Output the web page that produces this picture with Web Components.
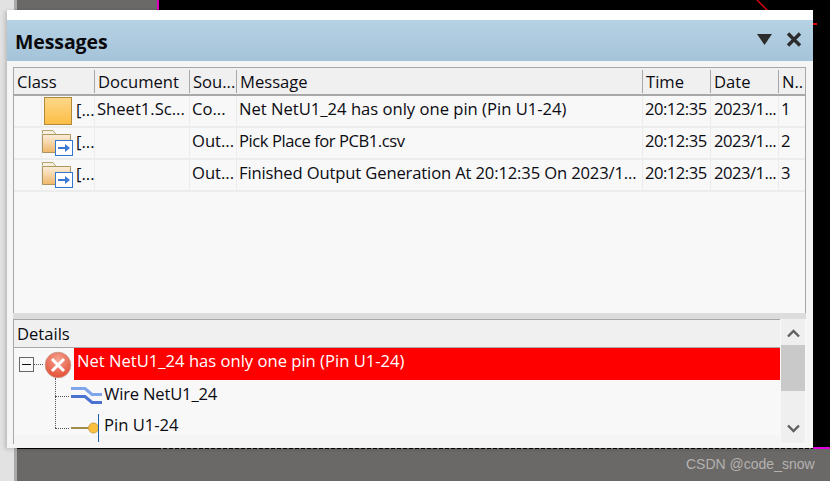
<!DOCTYPE html>
<html>
<head>
<meta charset="utf-8">
<title>Messages</title>
<style>
  html, body { margin: 0; padding: 0; width: 830px; height: 481px; overflow: hidden; background: #000; }
  body { font-family: "Open Sans", "Noto Sans", sans-serif; color: #0b0b12; }
</style>
</head>
<body>
<pcb-desktop>
  <msg-panel title="Messages">
    <msg-table></msg-table>
    <msg-details></msg-details>
  </msg-panel>
</pcb-desktop>

<script>
const COLS = [81, 95, 47, 406, 68, 68, 27]
const FONT_SIZE = "16.6px"

const ICONS = {
  marker: `<svg width="30" height="28" viewBox="0 0 30 28"><defs><linearGradient id="m" x1="0" y1="0" x2="0" y2="1"><stop offset="0" stop-color="#fcd88a"/><stop offset="1" stop-color="#fdbd45"/></linearGradient></defs><rect x="1.5" y="0.5" width="27" height="27" fill="url(#m)" stroke="#b08a38"/></svg>`,
  folder: `<svg width="32" height="28" viewBox="0 0 32 28"><defs><linearGradient id="f" x1="0" y1="0" x2="0" y2="1"><stop offset="0" stop-color="#fbeedd"/><stop offset="1" stop-color="#efb768"/></linearGradient></defs><path d="M0.5 4.5V1.5H11L14 5.5" fill="#f8efdc" stroke="#b5a473"/><path d="M0.5 5.5H28.5V23.5H0.5Z" fill="url(#f)" stroke="#ad9560"/><rect x="13.5" y="11.5" width="17" height="15" fill="#fff" stroke="#2f78d0"/><path d="M16 18H23V15L28 19L23 23V20H16Z" fill="#3a7ad0"/></svg>`,
  error: `<svg width="28" height="28" viewBox="0 0 28 28"><defs><radialGradient id="e" cx="0.5" cy="0.3" r="0.75"><stop offset="0" stop-color="#f5a593"/><stop offset="1" stop-color="#e2472c"/></radialGradient></defs><circle cx="14" cy="14" r="12.8" fill="url(#e)" stroke="#cf9a8e"/><path d="M8 8L20 20M20 8L8 20" stroke="#fff" stroke-width="3"/></svg>`,
  wire: `<svg width="32" height="20" viewBox="0 0 32 20"><path d="M0 2.5H14L21 8.5H31" fill="none" stroke="#7fa6ea" stroke-width="3"/><path d="M0 10.5H14L21 16.5H31" fill="none" stroke="#4a72d0" stroke-width="3"/></svg>`,
  pin: `<svg width="28" height="12" viewBox="0 0 28 12"><path d="M0 6H19" stroke="#a08c48" stroke-width="2"/><circle cx="22.5" cy="6" r="5" fill="#fcc040" stroke="#d0a040"/></svg>`,
}

class PcbDesktop extends HTMLElement {
  constructor() {
    super()
    this.attachShadow({ mode: "open" })
    this.shadowRoot.innerHTML = `
      <style>
        :host { display: block; position: relative; width: 830px; height: 481px; background: #000; overflow: hidden; }
        .sheet { position: absolute; left: 17px; top: 449px; right: 0; bottom: 0; background: #6b6967; }
        .sheet-top { position: absolute; left: 17px; top: 0; width: 140px; height: 10px; background: #6b6967; }
        .edge { position: absolute; left: 0; top: 0; width: 14px; height: 481px; background: #e2e2e2; }
        .edge2 { position: absolute; left: 14px; top: 0; width: 3px; height: 481px; background: #a9a9a9; }
        .pink { position: absolute; left: 157px; top: 0; width: 2px; height: 10px; background: #e000c0; }
        .pink2 { position: absolute; left: 813px; top: 447px; width: 17px; height: 2px; background: #e000e0; }
        .dash { position: absolute; left: 157px; top: 448px; width: 656px; height: 1px;
                background: repeating-linear-gradient(90deg, #000 0 4px, #777 4px 6px); }
        .red { position: absolute; left: 813px; top: 23px; width: 4px; height: 2px; background: #e00000; }
        svg { position: absolute; left: 750px; top: 0; }
        .mark { position: absolute; left: 686px; bottom: 9px; font: 14px "Liberation Sans", Arial, sans-serif; color: #b4b2b0; }
        .win { position: absolute; left: 7px; top: 10px; box-shadow: -2px 1px 4px rgba(0,0,0,.18); }
      </style>
      <div class="edge"></div>
      <div class="edge2"></div>
      <div class="sheet-top"></div>
      <div class="sheet"></div>
      <div class="pink"></div>
      <div class="pink2"></div>
      <div class="dash"></div>
      <div class="red"></div>
      <svg width="20" height="11" viewBox="0 0 20 11"><path d="M7 0L18 11" stroke="#e00010" stroke-width="1.4"/></svg>
      <div class="win"><slot></slot></div>
      <div class="mark">CSDN @code_snow</div>
    `
  }
}

class MsgPanel extends HTMLElement {
  constructor() {
    super()
    this.attachShadow({ mode: "open" })
    const title = this.getAttribute("title")
    this.shadowRoot.innerHTML = `
      <style>
        :host { display: block; width: 806px; height: 438px; background: #f5f5f5; box-sizing: border-box; }
        .strip { height: 10px; background: #fff; }
        header {
          height: 41px; display: flex; align-items: center; justify-content: space-between;
          background: linear-gradient(#b6d1e4, #a5c4d9); padding: 0 11px 0 8px;
        }
        h1 { margin: 0; font: 700 19.5px "Open Sans", sans-serif; color: #0a0a0e; letter-spacing: -0.1px; position: relative; top: 1px; }
        .btns { display: flex; align-items: center; gap: 14px; margin-top: -3px; }
        svg { display: block; }
        .body { padding: 6px 7px 0 6px; }
      </style>
      <div class="strip"></div>
      <header>
        <h1>${title}</h1>
        <div class="btns">
          <svg width="15" height="11" viewBox="0 0 15 11"><path d="M0 0H15L7.5 11Z" fill="#2c2c2c"/></svg>
          <svg width="16" height="15" viewBox="0 0 16 15"><path d="M2 1.5L14 13.5M14 1.5L2 13.5" stroke="#2c2c2c" stroke-width="3.4"/></svg>
        </div>
      </header>
      <div class="body"><slot></slot></div>
    `
  }
}

class MsgRow extends HTMLElement {
  constructor() {
    super()
    this.attachShadow({ mode: "open" })
    const kind = this.getAttribute("icon")
    const inset = kind == "marker" ? 29 : 28
    const gap = kind == "marker" ? 3 : 2
    const tight = this.getAttribute("tight") || "0"
    const cells = JSON.parse(this.getAttribute("cells"))
    this.shadowRoot.innerHTML = `
      <style>
        :host { display: grid; grid-template-columns: ${COLS.map(c => c + "px").join(" ")}; height: 32px; box-sizing: border-box;
                border-bottom: 2px solid #ececec; background: #f8f8f8; }
        div { border-right: 1px solid #ececec; padding-left: 2px; line-height: 26px; white-space: nowrap; overflow: hidden; font-size: ${FONT_SIZE}; box-sizing: border-box; }
        div:last-child { border-right: none; }
        .cls { display: flex; align-items: center; padding-left: ${inset}px; height: 30px; background: linear-gradient(90deg, #f8f8f8 27px, #ececec 27px, #ececec 28px, #f8f8f8 28px); }
        .cls svg { display: block; flex: none; margin-right: ${gap}px; }
        .cls span { line-height: 26px; margin-bottom: 2px; }
        .msg { letter-spacing: ${tight}; }
        .num { letter-spacing: -0.5px; }
        .date { padding-left: 3px; }
      </style>
      <div class="cls">${ICONS[kind]}<span>[...</span></div>
      <div>${cells[0]}</div>
      <div>${cells[1]}</div>
      <div class="msg">${cells[2]}</div>
      <div class="num">${cells[3]}</div>
      <div class="num date">${cells[4]}</div>
      <div>${cells[5]}</div>
    `
  }
}

class MsgTable extends HTMLElement {
  constructor() {
    super()
    this.attachShadow({ mode: "open" })
    const heads = ["Class", "Document", "Sou...", "Message", "Time", "Date", "N.."]
    const rows = [
      ["marker", "0", ["Sheet1.Sc...", "Co...", "Net NetU1_24 has only one pin (Pin U1-24)", "20:12:35", "2023/1...", "1"]],
      ["folder", "-0.45px", ["", "Out...", "Pick Place for PCB1.csv", "20:12:35", "2023/1...", "2"]],
      ["folder", "-0.14px", ["", "Out...", "Finished Output Generation At 20:12:35 On 2023/1...", "20:12:35", "2023/1...", "3"]],
    ]
    this.shadowRoot.innerHTML = `
      <style>
        :host { display: block; height: 246px; box-sizing: border-box; border: 1px solid #a8a8a8; border-bottom: none; background: #f8f8f8; }
        .head { display: grid; grid-template-columns: ${COLS.map(c => c + "px").join(" ")}; height: 28px; box-sizing: border-box;
                background: #f0f0f0; border-bottom: 2px solid #a8a8a8; }
        .head div { padding: 2px 0 0 3px; line-height: 24px; font-size: ${FONT_SIZE}; box-sizing: border-box; position: relative; overflow: hidden; white-space: nowrap; }
        .head div:not(:last-child)::after { content: ""; position: absolute; right: 0; top: 2px; bottom: 1px; width: 1px; background: #a8a8a8; }
      </style>
      <div class="head">${heads.map(h => `<div>${h}</div>`).join("")}</div>
      ${rows.map(r => `<msg-row icon="${r[0]}" tight="${r[1]}" cells='${JSON.stringify(r[2])}'></msg-row>`).join("")}
    `
  }
}

class MsgDetails extends HTMLElement {
  constructor() {
    super()
    this.attachShadow({ mode: "open" })
    this.shadowRoot.innerHTML = `
      <style>
        :host { display: grid; grid-template-columns: 767px 26px; height: 122px; box-sizing: border-box;
                border-top: 6px solid #dcdcdc; position: relative; background: #f8f8f8; font-size: ${FONT_SIZE}; }
        .left { border-left: 1px solid #a8a8a8; border-top: 1px solid #a8a8a8; display: flex; flex-direction: column; min-width: 0; }
        .title { height: 28px; flex: none; box-sizing: border-box; background: #f0f0f0; border-bottom: 1px solid #a8a8a8; padding-left: 3px; line-height: 27px; }
        .tree { position: relative; flex: 1; overflow: hidden; }
        .row { display: flex; align-items: center; height: 32px; white-space: nowrap; }
        .row svg { display: block; flex: none; }
        .top { padding-left: 5px; }
        .top svg { margin: 1px 2px 0 1px; }
        .box { width: 15px; height: 15px; box-sizing: border-box; border: 1px solid #666; position: relative; background: #f8f8f8; flex: none; margin-top: 1px; }
        .box::after { content: ""; position: absolute; left: 2px; right: 2px; top: 6px; height: 1px; background: #111; }
        .dots { width: 9px; border-top: 1px dotted #555; flex: none; margin-top: 1px; }
        .sel { background: #f00; color: #fff; height: 32px; line-height: 25px; padding-left: 3px; flex: 1; }
        .sub { padding-left: 41px; position: relative; }
        .sub i { width: 14px; border-top: 1px dotted #555; flex: none; margin-right: 2px; }
        .vline { position: absolute; left: 41px; top: 30px; height: 50px; border-left: 1px dotted #555; }
        .wire { height: 20px; }
        .lbl { line-height: 27px; position: relative; top: -3px; margin-left: 1px; letter-spacing: -0.18px; }
        .caret { border-left: 1px solid #1a5fa8; height: 28px; padding-left: 5px; line-height: 22px; margin-left: -1px; flex: none; }
        .bar { display: flex; flex-direction: column; align-items: center; background: #efefef; border: 1px solid #f8f8f8; border-top: none; box-sizing: border-box; }
        .thumb { width: 24px; height: 46px; background: #c9c9c9; }
        .end { height: 26px; display: flex; align-items: center; justify-content: center; flex: none; }
        .end.up { padding-top: 2px; box-sizing: border-box; }
        .end.down { padding-bottom: 4px; box-sizing: border-box; }
        .fill { flex: 1; }
      </style>
      <div class="left">
        <div class="title">Details</div>
        <div class="tree">
          <div class="row top">
            <div class="box"></div><div class="dots"></div>
            ${ICONS.error}
            <div class="sel">Net NetU1_24 has only one pin (Pin U1-24)</div>
          </div>
          <div class="vline"></div>
          <div class="row sub">
            <i></i><span class="wire">${ICONS.wire}</span><span class="lbl">Wire NetU1_24</span>
          </div>
          <div class="row sub">
            <i></i>${ICONS.pin}<span class="caret">Pin U1-24</span>
          </div>
        </div>
      </div>
      <div class="bar">
        <div class="end up"><svg width="13" height="9" viewBox="0 0 13 9"><path d="M1 7.5L6.5 2L12 7.5" fill="none" stroke="#606060" stroke-width="2.4"/></svg></div>
        <div class="thumb"></div>
        <div class="fill"></div>
        <div class="end down"><svg width="13" height="9" viewBox="0 0 13 9"><path d="M1 1.5L6.5 7L12 1.5" fill="none" stroke="#606060" stroke-width="2.4"/></svg></div>
      </div>
    `
  }
}

customElements.define("msg-row", MsgRow)
customElements.define("msg-table", MsgTable)
customElements.define("msg-details", MsgDetails)
customElements.define("msg-panel", MsgPanel)
customElements.define("pcb-desktop", PcbDesktop)
</script>
</body>
</html>
